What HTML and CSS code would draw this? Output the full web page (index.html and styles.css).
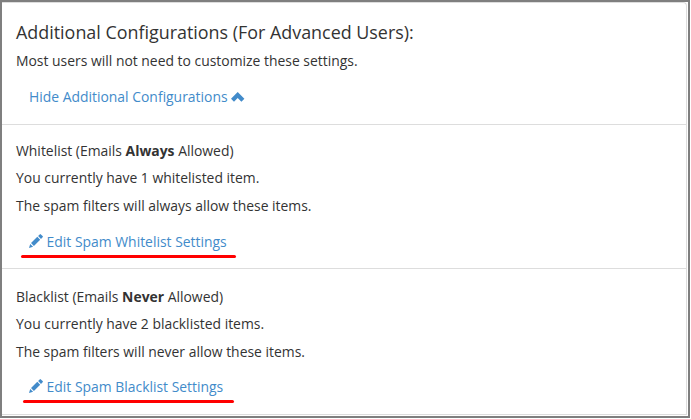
FILE: index.html
```
<!doctype html>
<html lang="en">
<head>
	<meta charset="utf-8">
	<title>Additional Configurations</title>
	<link rel="stylesheet" href="styles.css">
</head>
<body>
	<div class="frame">
		<div class="panel">
			<div class="section intro">
				<h2>Additional Configurations (For Advanced Users):</h2>
				<p>Most users will not need to customize these settings.</p>
				<a class="btn-link" href="#">Hide Additional Configurations <svg class="chevron" width="14" height="10" viewBox="0 0 14 10"><path d="M6.7 0L13.4 6.7 10.4 9.7 6.7 6 3 9.7 0 6.7z"/></svg></a>
			</div>
			<div class="section whitelist">
				<p>Whitelist (Emails <strong>Always</strong> Allowed)</p>
				<p>You currently have 1 whitelisted item.</p>
				<p>The spam filters will always allow these items.</p>
				<a class="btn-link marked" href="#"><svg class="pencil" width="14" height="14" viewBox="0 0 14 14"><path d="M0 14l1.2-4.1 2.9 2.9zM2 9.1l6.3-6.3 2.9 2.9L4.9 12zM9.1 2L10.7.4q.6-.6 1.2 0l1.7 1.7q.6.6 0 1.2L12 4.9z"/></svg> Edit Spam Whitelist Settings</a>
			</div>
			<div class="section blacklist">
				<p>Blacklist (Emails <strong>Never</strong> Allowed)</p>
				<p>You currently have 2 blacklisted items.</p>
				<p>The spam filters will never allow these items.</p>
				<a class="btn-link marked" href="#"><svg class="pencil" width="14" height="14" viewBox="0 0 14 14"><path d="M0 14l1.2-4.1 2.9 2.9zM2 9.1l6.3-6.3 2.9 2.9L4.9 12zM9.1 2L10.7.4q.6-.6 1.2 0l1.7 1.7q.6.6 0 1.2L12 4.9z"/></svg> Edit Spam Blacklist Settings</a>
			</div>
		</div>
	</div>
</body>
</html>
```

FILE: styles.css
```
* {
	box-sizing: border-box;
}

body {
	margin: 0;
	background: #fff;
	color: #333;
	font: 13.92px/20px "Open Sans", sans-serif;
}

.frame {
	width: 690px;
	height: 418px;
	border: 2px solid #7f7f7f;
	overflow: hidden;
}

.panel {
	width: 685px;
	border-top: 1px solid #ddd;
	border-right: 1px solid #ddd;
	border-radius: 0 4px 0 0;
}

.section {
	padding: 17px 14px 0;
	border-bottom: 1px solid #ddd;
}

.intro {
	height: 122px;
}

.whitelist {
	height: 144px;
	padding-top: 16px;
}

.blacklist {
	height: 146px;
	padding-top: 18px;
}

h2 {
	margin: 0 0 7px;
	font-size: 17.9px;
	font-weight: normal;
	line-height: 24px;
}

p {
	margin: 0 0 7.4px;
}

.intro p {
	margin-bottom: 8px;
}

.btn-link {
	display: inline-block;
	margin-top: 8px;
	padding-left: 13px;
	color: #428bca;
	text-decoration: none;
}

.whitelist .btn-link {
	margin-top: 9px;
}

.btn-link svg {
	fill: #428bca;
}

.chevron {
	vertical-align: 0;
}

.pencil {
	vertical-align: -1px;
}

/* red marker stroke below the edit links */
.marked::after {
	content: "";
	display: block;
	width: 215px;
	height: 3px;
	margin: 3px 0 0 -8px;
	border-radius: 2px;
	background: #f00;
}

.blacklist .marked::after {
	width: 211px;
	margin-left: -6px;
}
```
